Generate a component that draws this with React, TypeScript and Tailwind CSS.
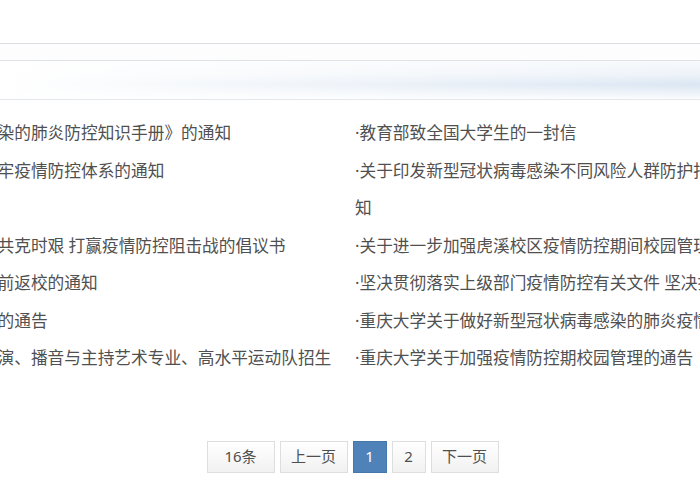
import React from 'react'

type Row = { left: string; right: React.ReactNode }

// 每行两列，右列第二条折成两行
const rows: Row[] = [
  { left: '·病毒感染的肺炎防控知识手册》的通知', right: '·教育部致全国大学生的一封信' },
  {
    left: '·关于筑牢疫情防控体系的通知',
    right: (
      <>
        ·关于印发新型冠状病毒感染不同风险人群防护指南的通
        <br />知
      </>
    ),
  },
  { left: '·倡议：共克时艰 打赢疫情防控阻击战的倡议书', right: '·关于进一步加强虎溪校区疫情防控期间校园管理的通知' },
  { left: '·不得提前返校的通知', right: '·坚决贯彻落实上级部门疫情防控有关文件 坚决打赢阻击战' },
  { left: '·致家长的通告', right: '·重庆大学关于做好新型冠状病毒感染的肺炎疫情防控工作的通知' },
  { left: '·关于表演、播音与主持艺术专业、高水平运动队招生', right: '·重庆大学关于加强疫情防控期校园管理的通告' },
]

function PageButton({ label, active, wide }: { label: string; active?: boolean; wide?: boolean }) {
  return (
    <button
      className={
        (wide ? 'w-[68px] ' : 'w-[34px] ') +
        (active
          ? 'bg-[#4f82b8] border-[#4677ab] text-white'
          : 'bg-gradient-to-b from-white to-[#f1f1f1] border-[#dedede] text-[#4f4f4f]') +
        ' h-[32px] border text-[15px] flex items-center justify-center'
      }
    >
      {label}
    </button>
  )
}

export default function App() {
  return (
    <div
      className="w-[700px] h-[500px] overflow-hidden bg-white"
      style={{ fontFamily: '"Noto Sans", "Noto Sans CJK SC", sans-serif' }}
    >
      {/* 顶部横条 */}
      <div className="h-[43px]" />
      <div className="h-px bg-[#d9dde2]" />
      <div className="h-[16px] bg-[#fdfdfd]" />
      <div className="h-px bg-[#dfe3e8]" />
      <div className="h-[38px] bg-[linear-gradient(to_bottom,#f7f9fc,#eef3f9_35%,#dbe6f2_62%,#eef3f9_85%,#fbfcfd)]">
        <div className="h-full bg-gradient-to-r from-white via-white/60 via-40% to-transparent" />
      </div>
      <div className="h-px bg-[#e4e8ec]" />

      {/* 列表 */}
      <div className="ml-[-57px] pt-[14px] grid grid-cols-[412px_412px] text-[16.7px] leading-[37.5px] text-[#505050]">
        {rows.map((r, i) => (
          <React.Fragment key={i}>
            <div className="whitespace-nowrap">{r.left}</div>
            <div className="whitespace-nowrap">{r.right}</div>
          </React.Fragment>
        ))}
      </div>

      {/* 分页 */}
      <div className="mt-[64px] flex justify-center gap-[5px] pl-[5px]">
        <PageButton label="16条" wide />
        <PageButton label="上一页" wide />
        <PageButton label="1" active />
        <PageButton label="2" />
        <PageButton label="下一页" wide />
      </div>
    </div>
  )
}
